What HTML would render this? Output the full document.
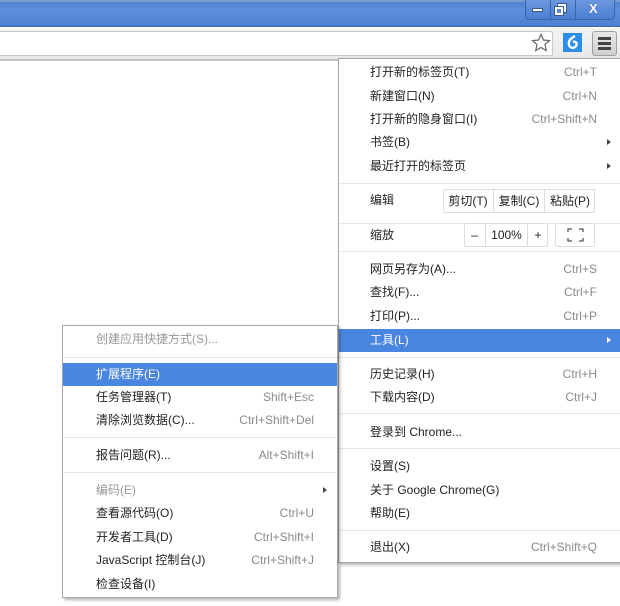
<!DOCTYPE html>
<html><head><meta charset="utf-8"><style>
*{margin:0;padding:0;box-sizing:border-box}
body{width:620px;height:606px;overflow:hidden;background:#fff;position:relative;font-family:"Liberation Sans","Noto Sans CJK SC",sans-serif;font-size:12px;color:#222}
.a{position:absolute}
.menu{position:absolute;background:#fff;border:1px solid #a8a8a8;box-shadow:2px 2px 3px rgba(0,0,0,.3)}
.r{position:absolute;left:0;right:0;height:23px;line-height:23px}
.r .t{position:absolute}
.r .s{position:absolute;color:#8a8a8a}
.hl{background:#4a85e0;color:#fff}
.sep{position:absolute;left:0;right:0;height:1px;background:#e6e6e6}
.dis{color:#999}
.arrow{position:absolute;width:0;height:0;border-left:4px solid #444;border-top:3.5px solid transparent;border-bottom:3.5px solid transparent}
.btn{position:absolute;border:1px solid #ddd;border-radius:2px;height:24px;line-height:22px;text-align:center;background:#fff}
</style></head><body>
<!-- title bar -->
<div class="a" style="left:0;top:0;width:620px;height:27px;background:linear-gradient(#4f7fcf,#5c8fdc 40%,#4e7fd0);border-bottom:1px solid #3d63a8"></div>
<div class="a" style="left:0;top:0;width:620px;height:2px;background:#7c9ccf"></div>
<div class="a" style="left:525px;top:0;width:90px;height:20px;border:1px solid #3c62a6;border-top:none;border-radius:0 0 4px 4px;background:linear-gradient(#6a98de,#4b7fd2)"></div>
<div class="a" style="left:550px;top:0;width:1px;height:20px;background:#3c62a6"></div>
<div class="a" style="left:575px;top:0;width:1px;height:20px;background:#3c62a6"></div>
<div class="a" style="left:532px;top:8px;width:11px;height:4px;background:#fff;border:1px solid #3a5a90"></div>
<div class="a" style="left:558px;top:4px;width:8px;height:8px;border:2px solid #fff;outline:1px solid #3a5a90"></div>
<div class="a" style="left:555px;top:7px;width:8px;height:8px;border:2px solid #fff;background:#5a8ad8;outline:1px solid #3a5a90"></div>
<div class="a" style="left:589px;top:1px;color:#fff;font-weight:bold;font-size:13px;text-shadow:0 0 1px #345">X</div>
<!-- toolbar -->
<div class="a" style="left:0;top:28px;width:620px;height:33px;background:linear-gradient(#f4f4f4,#e8e8e8);border-bottom:2px solid #c4c4c4"></div>
<div class="a" style="left:-2px;top:31px;width:555px;height:25px;background:#fff;border:1px solid #c8c8c8;border-radius:2px"></div>
<svg class="a" style="left:531px;top:33px" width="20" height="20" viewBox="0 0 20 20"><path d="M10 1.5l2.5 5.5 6 .6-4.5 4 1.3 6-5.3-3.1-5.3 3.1 1.3-6-4.5-4 6-.6z" fill="#fff" stroke="#666" stroke-width="1.2"/></svg>
<div class="a" style="left:563px;top:33px;width:19px;height:19px;background:#2b8de6"></div>
<svg class="a" style="left:563px;top:33px" width="19" height="19" viewBox="0 0 19 19"><path d="M12 3C8 5 5 8 6 12c1 3 5 4 7 1 1.5-2 0-5-3-4" fill="none" stroke="#fff" stroke-width="2.4"/></svg>
<div class="a" style="left:592px;top:31px;width:25px;height:25px;background:linear-gradient(#e8e8e8,#cfcfcf);border:1px solid #a0a0a0;border-radius:3px"></div>
<div class="a" style="left:598px;top:37px;width:13px;height:3px;background:#444"></div>
<div class="a" style="left:598px;top:42px;width:13px;height:3px;background:#444"></div>
<div class="a" style="left:598px;top:47px;width:13px;height:3px;background:#444"></div>

<!-- main menu -->
<div class="menu" style="left:338px;top:58px;width:284px;height:505px">
<div class="r" style="top:2px"><span class="t" style="left:31px">打开新的标签页(T)</span><span class="s" style="right:24px">Ctrl+T</span></div>
<div class="r" style="top:26px"><span class="t" style="left:31px">新建窗口(N)</span><span class="s" style="right:24px">Ctrl+N</span></div>
<div class="r" style="top:49px"><span class="t" style="left:31px">打开新的隐身窗口(I)</span><span class="s" style="right:24px">Ctrl+Shift+N</span></div>
<div class="r" style="top:72px"><span class="t" style="left:31px">书签(B)</span><i class="arrow" style="right:10px;top:8px"></i></div>
<div class="r" style="top:96px"><span class="t" style="left:31px">最近打开的标签页</span><i class="arrow" style="right:10px;top:8px"></i></div>
<div class="sep" style="top:124px"></div>
<div class="r" style="top:130px"><span class="t" style="left:31px">编辑</span></div>
<div class="btn" style="left:104px;top:130px;width:152px"></div>
<div class="a" style="left:104px;top:130px;width:50px;height:24px;line-height:24px;text-align:center">剪切(T)</div>
<div class="a" style="left:154px;top:131px;width:1px;height:22px;background:#ddd"></div>
<div class="a" style="left:155px;top:130px;width:50px;height:24px;line-height:24px;text-align:center">复制(C)</div>
<div class="a" style="left:205px;top:131px;width:1px;height:22px;background:#ddd"></div>
<div class="a" style="left:206px;top:130px;width:50px;height:24px;line-height:24px;text-align:center">粘贴(P)</div>
<div class="sep" style="top:164px"></div>
<div class="r" style="top:165px"><span class="t" style="left:31px">缩放</span></div>
<div class="btn" style="left:125px;top:164px;width:84px"></div>
<div class="a" style="left:125px;top:164px;width:21px;height:24px;line-height:24px;text-align:center">–</div>
<div class="a" style="left:146px;top:165px;width:1px;height:22px;background:#ddd"></div>
<div class="a" style="left:147px;top:164px;width:41px;height:24px;line-height:24px;text-align:center">100%</div>
<div class="a" style="left:188px;top:165px;width:1px;height:22px;background:#ddd"></div>
<div class="a" style="left:189px;top:164px;width:20px;height:24px;line-height:24px;text-align:center">+</div>
<div class="btn" style="left:216px;top:164px;width:40px"></div>
<svg class="a" style="left:228px;top:169px" width="17" height="14"><path d="M1 4V1h4M12 1h4v3M16 10v3h-4M5 13H1v-3" fill="none" stroke="#555" stroke-width="1.3"/></svg>
<div class="sep" style="top:192px"></div>
<div class="r" style="top:199px"><span class="t" style="left:31px">网页另存为(A)...</span><span class="s" style="right:24px">Ctrl+S</span></div>
<div class="r" style="top:222px"><span class="t" style="left:31px">查找(F)...</span><span class="s" style="right:24px">Ctrl+F</span></div>
<div class="r" style="top:246px"><span class="t" style="left:31px">打印(P)...</span><span class="s" style="right:24px">Ctrl+P</span></div>
<div class="r hl" style="top:270px"><span class="t" style="left:31px">工具(L)</span><i class="arrow" style="right:10px;top:8px;border-left-color:#fff"></i></div>
<div class="sep" style="top:298px"></div>
<div class="r" style="top:304px"><span class="t" style="left:31px">历史记录(H)</span><span class="s" style="right:24px">Ctrl+H</span></div>
<div class="r" style="top:327px"><span class="t" style="left:31px">下载内容(D)</span><span class="s" style="right:24px">Ctrl+J</span></div>
<div class="sep" style="top:354px"></div>
<div class="r" style="top:362px"><span class="t" style="left:31px">登录到 Chrome...</span></div>
<div class="sep" style="top:389px"></div>
<div class="r" style="top:396px"><span class="t" style="left:31px">设置(S)</span></div>
<div class="r" style="top:420px"><span class="t" style="left:31px">关于 Google Chrome(G)</span></div>
<div class="r" style="top:443px"><span class="t" style="left:31px">帮助(E)</span></div>
<div class="sep" style="top:471px"></div>
<div class="r" style="top:477px"><span class="t" style="left:31px">退出(X)</span><span class="s" style="right:24px">Ctrl+Shift+Q</span></div>
</div>

<!-- submenu -->
<div class="menu" style="left:62px;top:325px;width:276px;height:273px">
<div class="r dis" style="top:2px"><span class="t" style="left:33px">创建应用快捷方式(S)...</span></div>
<div class="sep" style="top:31px"></div>
<div class="r hl" style="top:37px"><span class="t" style="left:33px">扩展程序(E)</span></div>
<div class="r" style="top:60px"><span class="t" style="left:33px">任务管理器(T)</span><span class="s" style="right:23px">Shift+Esc</span></div>
<div class="r" style="top:83px"><span class="t" style="left:33px">清除浏览数据(C)...</span><span class="s" style="right:23px">Ctrl+Shift+Del</span></div>
<div class="sep" style="top:111px"></div>
<div class="r" style="top:118px"><span class="t" style="left:33px">报告问题(R)...</span><span class="s" style="right:23px">Alt+Shift+I</span></div>
<div class="sep" style="top:146px"></div>
<div class="r dis" style="top:153px"><span class="t" style="left:33px">编码(E)</span><i class="arrow" style="right:10px;top:8px"></i></div>
<div class="r" style="top:176px"><span class="t" style="left:33px">查看源代码(O)</span><span class="s" style="right:23px">Ctrl+U</span></div>
<div class="r" style="top:200px"><span class="t" style="left:33px">开发者工具(D)</span><span class="s" style="right:23px">Ctrl+Shift+I</span></div>
<div class="r" style="top:223px"><span class="t" style="left:33px">JavaScript 控制台(J)</span><span class="s" style="right:23px">Ctrl+Shift+J</span></div>
<div class="r" style="top:247px"><span class="t" style="left:33px">检查设备(I)</span></div>
</div>
</body></html>
